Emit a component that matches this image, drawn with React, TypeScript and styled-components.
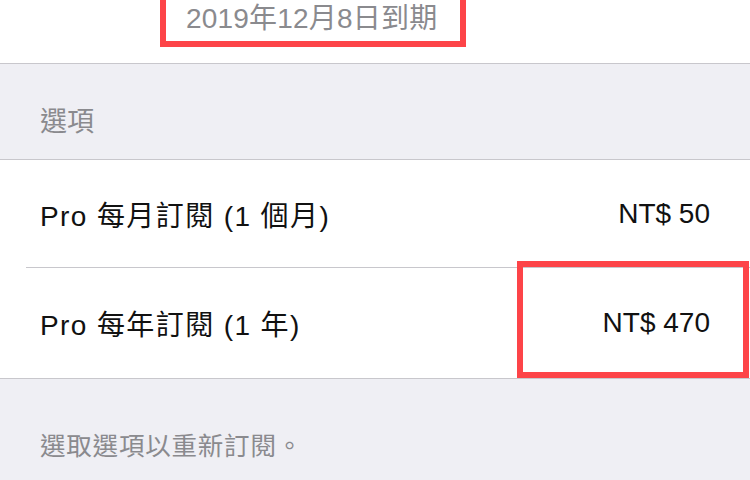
import styled, { createGlobalStyle } from "styled-components";

const GlobalStyle = createGlobalStyle`
  html, body {
    margin: 0;
    padding: 0;
    background: #efeff4;
  }
  body {
    font-family: "Liberation Sans", "Noto Sans CJK TC", sans-serif;
    -webkit-font-smoothing: antialiased;
  }
`;

const Page = styled.div`
  width: 750px;
  height: 480px;
  overflow: hidden;
  background: #efeff4;
  display: flex;
  flex-direction: column;
`;

const Header = styled.div`
  position: relative;
  height: 64px;
  box-sizing: border-box;
  background: #ffffff;
  border-bottom: 1px solid #c8c7cc;
  padding-left: 186px;
  display: flex;
  align-items: flex-start;
`;

const ExpiryText = styled.div`
  font-size: 28px;
  line-height: 38px;
  color: #8a8a8e;
  letter-spacing: 0.2px;
`;

const Highlight = styled.div<{ $left: number; $top: number; $width: number; $height: number }>`
  position: absolute;
  left: ${(p) => p.$left}px;
  top: ${(p) => p.$top}px;
  width: ${(p) => p.$width}px;
  height: ${(p) => p.$height}px;
  box-sizing: border-box;
  border: 6px solid #fd4448;
  pointer-events: none;
`;

const SectionTitle = styled.div`
  height: 96px;
  box-sizing: border-box;
  padding: 40px 40px 0;
  font-size: 27px;
  line-height: 36px;
  color: #8a8a8e;
  border-bottom: 1px solid #c8c7cc;
`;

const List = styled.div`
  background: #ffffff;
  border-bottom: 1px solid #c8c7cc;
  display: flex;
  flex-direction: column;
`;

const Row = styled.div<{ $last?: boolean }>`
  position: relative;
  height: ${(p) => (p.$last ? 110 : 108)}px;
  margin-left: 26px;
  padding: 0 40px 0 14px;
  box-sizing: border-box;
  display: flex;
  align-items: center;
  justify-content: space-between;
  border-bottom: ${(p) => (p.$last ? "none" : "1px solid #c8c7cc")};
  font-size: 28px;
  color: #111111;
`;

const Label = styled.span`
  letter-spacing: 1.4px;
`;

const Price = styled.span``;

const Footer = styled.div`
  padding: 50px 40px 0;
  font-size: 25.5px;
  line-height: 34px;
  color: #8a8a8e;
  letter-spacing: 0.8px;
`;

const plans = [
  { label: "Pro 每月訂閱 (1 個月)", price: "NT$ 50", marked: false },
  { label: "Pro 每年訂閱 (1 年)", price: "NT$ 470", marked: true },
];

export default function App() {
  return (
    <>
      <GlobalStyle />
      <Page>
        <Header>
          <ExpiryText>2019年12月8日到期</ExpiryText>
          <Highlight $left={160} $top={-10} $width={306} $height={57} />
        </Header>
        <SectionTitle>選項</SectionTitle>
        <List>
          {plans.map((plan, i) => (
            <Row key={plan.label} $last={i === plans.length - 1}>
              <Label>{plan.label}</Label>
              <Price>{plan.price}</Price>
              {plan.marked && <Highlight $left={491} $top={-7} $width={232} $height={117} />}
            </Row>
          ))}
        </List>
        <Footer>選取選項以重新訂閱。</Footer>
      </Page>
    </>
  );
}
